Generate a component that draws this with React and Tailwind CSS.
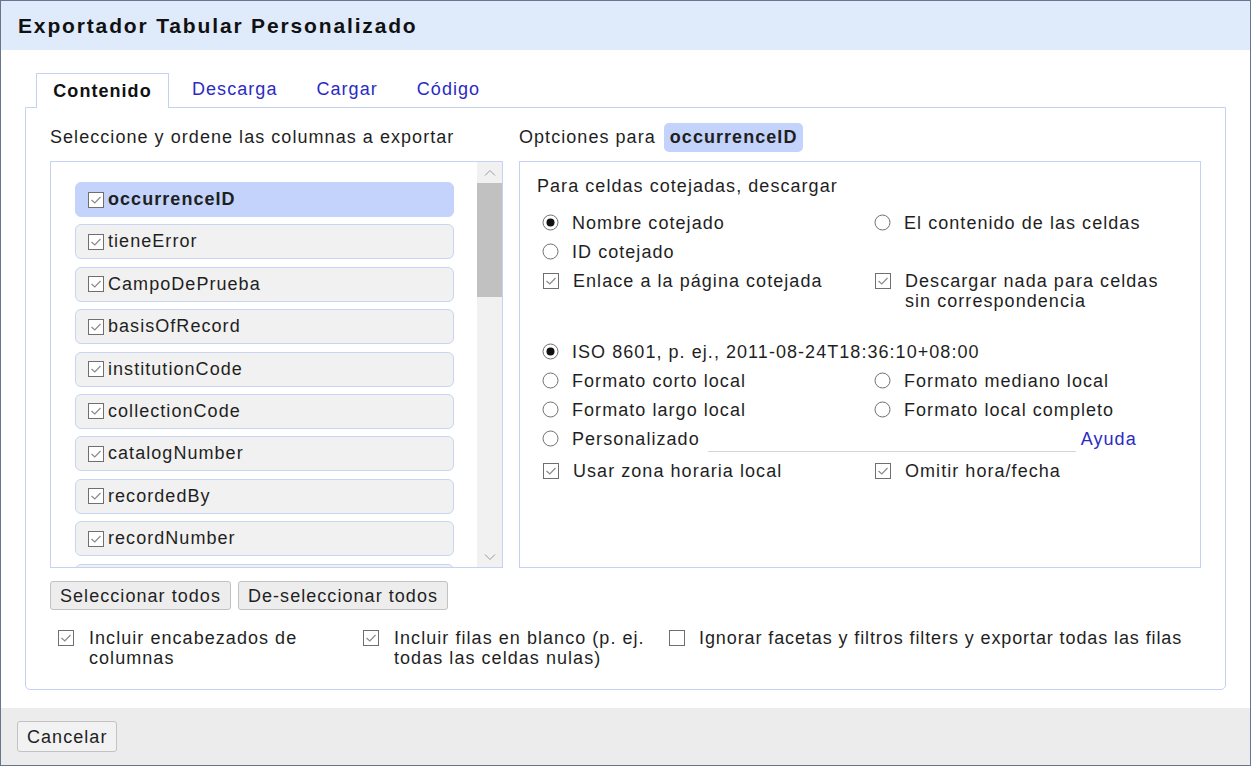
import React from 'react'

const FONT = { fontFamily: '"Liberation Sans", Arial, sans-serif' }

const COLUMNS = [
  'occurrenceID', 'tieneError', 'CampoDePrueba', 'basisOfRecord', 'institutionCode',
  'collectionCode', 'catalogNumber', 'recordedBy', 'recordNumber',
]

function Check({ checked = true }) {
  return (
    <svg width="18" height="18" viewBox="0 0 18 18" className="flex-shrink-0">
      <rect x="1.5" y="1.5" width="15" height="15" fill="#fff" stroke="#6f6f6f" strokeWidth="1" />
      {checked && <path d="M4.5 9 L7.8 12 L13.5 6" fill="none" stroke="#8a8a8a" strokeWidth="1.2" />}
    </svg>
  )
}

function Radio({ checked = false }) {
  return (
    <svg width="17" height="17" viewBox="0 0 17 17" className="flex-shrink-0">
      <circle cx="8.5" cy="8.5" r="7.5" fill="#fff" stroke="#6f6f6f" strokeWidth="1" />
      {checked && <circle cx="8.5" cy="8.5" r="4" fill="#111" />}
    </svg>
  )
}

function Opt({ type, checked, children, className = '' }) {
  return (
    <div className={`flex items-start gap-[13px] ${className}`}>
      <div className="pt-[1px]">{type === 'radio' ? <Radio checked={checked} /> : <Check checked={checked} />}</div>
      <span className="leading-[20px]">{children}</span>
    </div>
  )
}

function Btn({ children, className = '' }) {
  return (
    <button className={`flex items-center px-[9px] border border-[#c2c2c2] rounded-[3px] leading-[20px] ${className}`}>
      {children}
    </button>
  )
}

export default function App() {
  return (
    <div style={FONT} className="w-[1251px] h-[766px] bg-white border border-[#65768e] flex flex-col text-[18px] tracking-[1.05px] text-[#1f1f1f] overflow-hidden">
      {/* Header */}
      <div className="h-[49px] bg-[#dfeafb] flex items-center pl-[17px] flex-shrink-0">
        <span className="text-[21px] tracking-[1.85px] font-bold text-[#111]">Exportador Tabular Personalizado</span>
      </div>

      {/* Body */}
      <div className="flex-1 px-[24px] pt-[22px]">
        {/* Tabs */}
        <div className="flex items-end h-[35px] pl-[11px]">
          <div className="h-[35px] w-[133px] border border-[#c6d2f3] border-b-0 bg-white flex items-center justify-center font-bold text-[#111] relative top-[1px] z-10">
            Contenido
          </div>
          <div className="flex items-center h-[35px] text-[#2b2bc4]">
            <span className="ml-[23px]">Descarga</span>
            <span className="ml-[39px]">Cargar</span>
            <span className="ml-[39px]">Código</span>
          </div>
        </div>

        {/* Panel */}
        <div className="h-[583px] border border-[#c6d2f3] rounded-b-[5px] px-[24px] pt-[17px]">
          <div className="flex gap-[16px]">
            {/* Left column */}
            <div className="w-[454px] flex flex-col">
              <div className="h-[24px] leading-[24px]">Seleccione y ordene las columnas a exportar</div>
              <div className="mt-[12px] h-[407px] border border-[#c6d2f3] flex overflow-hidden">
                <div className="flex-1 pl-[24px] pr-[23px] pt-[20px] flex flex-col gap-[7.4px] overflow-hidden">
                  {COLUMNS.map((c, i) => (
                    <div
                      key={c}
                      className={`h-[35px] flex-shrink-0 rounded-[6px] border flex items-center gap-[3px] pl-[11px] ${
                        i === 0 ? 'bg-[#c3d3fb] border-[#c3d3fb] font-bold' : 'bg-[#f1f1f1] border-[#c9d4f3]'
                      }`}
                    >
                      <Check />
                      <span>{c}</span>
                    </div>
                  ))}
                  {/* next row, scrolled out of view */}
                  <div className="h-[35px] flex-shrink-0 rounded-[6px] border bg-[#f1f1f1] border-[#c9d4f3]" />
                </div>
                <div className="w-[25px] bg-[#f1f1f1] flex flex-col items-center">
                  <div className="h-[21px] flex items-center justify-center">
                    <svg width="12" height="8" viewBox="0 0 12 8"><path d="M1 6.5 L6 1.5 L11 6.5" fill="none" stroke="#9a9a9a" strokeWidth="1" /></svg>
                  </div>
                  <div className="w-full h-[114px] bg-[#c1c1c1]" />
                  <div className="flex-1" />
                  <div className="h-[21px] flex items-center justify-center">
                    <svg width="12" height="8" viewBox="0 0 12 8"><path d="M1 1.5 L6 6.5 L11 1.5" fill="none" stroke="#9a9a9a" strokeWidth="1" /></svg>
                  </div>
                </div>
              </div>
            </div>

            {/* Right column */}
            <div className="flex-1 flex flex-col">
              <div className="h-[24px] flex items-center">
                <span>Optciones para</span>
                <span className="ml-[8px] px-[6px] h-[29px] flex items-center rounded-[5px] bg-[#c3d3fb] font-bold">occurrenceID</span>
              </div>
              <div className="mt-[12px] h-[407px] w-[682px] border border-[#c6d2f3] pl-[17px] pt-[14px]">
                <div className="leading-[20px]">Para celdas cotejadas, descargar</div>
                <div className="grid grid-cols-[332px_1fr] pl-[5px] mt-[17px] gap-y-[9px]">
                  <Opt type="radio" checked>Nombre cotejado</Opt>
                  <Opt type="radio">El contenido de las celdas</Opt>
                  <Opt type="radio">ID cotejado</Opt>
                  <div />
                  <Opt type="check" checked>Enlace a la página cotejada</Opt>
                  <Opt type="check" checked>Descargar nada para celdas<br />sin correspondencia</Opt>
                </div>

                <div className="pl-[5px] mt-[31px]">
                  <Opt type="radio" checked>ISO 8601, p. ej., 2011-08-24T18:36:10+08:00</Opt>
                </div>
                <div className="grid grid-cols-[332px_1fr] pl-[5px] mt-[9px] gap-y-[9px]">
                  <Opt type="radio">Formato corto local</Opt>
                  <Opt type="radio">Formato mediano local</Opt>
                  <Opt type="radio">Formato largo local</Opt>
                  <Opt type="radio">Formato local completo</Opt>
                </div>
                <div className="pl-[5px] mt-[9px] flex items-start">
                  <Opt type="radio">Personalizado</Opt>
                  <div className="ml-[8px] w-[368px] h-[23px] border-b border-[#d4d4d4]" />
                  <span className="ml-[5px] text-[#2b2bc4] leading-[20px]">Ayuda</span>
                </div>
                <div className="grid grid-cols-[332px_1fr] pl-[5px] mt-[9px]">
                  <Opt type="check" checked>Usar zona horaria local</Opt>
                  <Opt type="check" checked>Omitir hora/fecha</Opt>
                </div>
              </div>
            </div>
          </div>

          {/* Buttons */}
          <div className="flex gap-[7px] mt-[13px]">
            <Btn className="h-[29px] bg-[#ededed]">Seleccionar todos</Btn>
            <Btn className="h-[29px] bg-[#ededed]">De-seleccionar todos</Btn>
          </div>

          {/* Bottom options */}
          <div className="flex mt-[18px] pl-[7px]">
            <Opt type="check" checked className="w-[305px] gap-[14px]">Incluir encabezados de<br />columnas</Opt>
            <Opt type="check" checked className="w-[306px] gap-[14px]">Incluir filas en blanco (p. ej.<br />todas las celdas nulas)</Opt>
            <Opt type="check" checked={false} className="gap-[13px] tracking-[0.9px]">Ignorar facetas y filtros filters y exportar todas las filas</Opt>
          </div>
        </div>
      </div>

      {/* Footer */}
      <div className="h-[57px] bg-[#ececec] flex items-center pl-[16px] flex-shrink-0">
        <Btn className="h-[31px] bg-[#f2f2f2]">Cancelar</Btn>
      </div>
    </div>
  )
}
